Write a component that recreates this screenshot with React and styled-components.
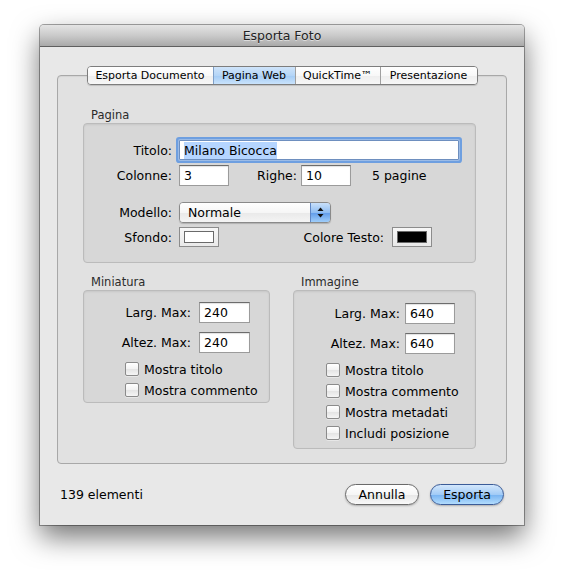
import React from "react";
import styled, { createGlobalStyle } from "styled-components";

const Global = createGlobalStyle`
  html, body { margin: 0; padding: 0; background: #ffffff; }
  body { font-family: "DejaVu Sans", "Liberation Sans", sans-serif; font-size: 12.5px; color: #000; }
  * { box-sizing: border-box; }
`;

const Page = styled.div`
  width: 564px;
  height: 580px;
  padding: 25px 0 0 40px;
`;

const Window = styled.div`
  width: 484px;
  height: 500px;
  display: flex;
  flex-direction: column;
  background: #e8e8e8;
  box-shadow: 0 0 0 1px rgba(0, 0, 0, 0.35), 0 12px 28px rgba(0, 0, 0, 0.55);
  border-radius: 4px 4px 0 0;
`;

const TitleBar = styled.div`
  height: 22px;
  flex: none;
  display: flex;
  align-items: center;
  justify-content: center;
  border-radius: 4px 4px 0 0;
  background: linear-gradient(#e4e4e4, #cacaca 50%, #a9a9a9);
  border-bottom: 1px solid #5f5f5f;
  color: #222;
  font-size: 12.5px;
  text-shadow: 0 1px 0 rgba(255, 255, 255, 0.5);
`;

const Body = styled.div`
  flex: 1;
  display: flex;
  flex-direction: column;
  padding: 19px 17px 0 17px;
`;

const TabStrip = styled.div`
  align-self: center;
  display: flex;
  height: 19px;
  margin-bottom: -10px;
  position: relative;
  z-index: 1;
  border: 1px solid #7d7d7d;
  border-radius: 4px;
  overflow: hidden;
  box-shadow: 0 1px 1px rgba(0, 0, 0, 0.15);
`;

const Tab = styled.div`
  width: ${(p) => p.$w}px;
  display: flex;
  align-items: center;
  justify-content: center;
  font-size: 11px;
  color: #000;
  border-left: ${(p) => (p.$first ? "none" : "1px solid #a0a0a0")};
  background: ${(p) =>
    p.$active
      ? "linear-gradient(#cfe4fa, #b4d5f7 50%, #a3cbf5 51%, #c9e3fc)"
      : "linear-gradient(#ffffff, #f8f8f8 50%, #eeeeee 51%, #f7f7f7)"};
  ${(p) => (p.$active ? "border-left-color: #7e9fc8;" : "")}
`;

const TabBox = styled.div`
  height: 389px;
  flex: none;
  border: 1px solid #a8a8a8;
  border-radius: 4px;
  background: #e1e1e1;
  padding: 32px 30px 0 25px;
  box-shadow: inset 0 1px 1px rgba(0, 0, 0, 0.06);
`;

const SectionLabel = styled.div`
  height: 14px;
  line-height: 14px;
  font-size: 11.5px;
  color: #2b2b2b;
  padding-left: 8px;
  margin: ${(p) => p.$mt || 0}px 0 1px 0;
`;

const Group = styled.div`
  background: #d7d7d7;
  border: 1px solid #bbbbbb;
  border-radius: 4px;
  box-shadow: inset 0 1px 2px rgba(0, 0, 0, 0.08);
  padding: ${(p) => p.$pad};
  height: ${(p) => (p.$h ? `${p.$h}px` : "auto")};
  display: flex;
  flex-direction: column;
`;

const Row = styled.div`
  display: flex;
  align-items: center;
  height: ${(p) => p.$h || 21}px;
  margin-top: ${(p) => p.$mt || 0}px;
`;

const Label = styled.div`
  width: ${(p) => p.$w}px;
  flex: none;
  text-align: right;
  margin-right: ${(p) => p.$gap ?? 7}px;
  white-space: nowrap;
`;

const Field = styled.div`
  width: ${(p) => p.$w}px;
  height: ${(p) => p.$h || 21}px;
  flex: none;
  background: #fff;
  border: 1px solid #9b9b9b;
  border-top-color: #6c6c6c;
  box-shadow: inset 0 1px 1px rgba(0, 0, 0, 0.12);
  display: flex;
  align-items: center;
  padding-left: 4px;
  white-space: nowrap;
  ${(p) =>
    p.$focus
      ? "box-shadow: 0 0 0 1px #9bbbe6, 0 0 0 3px #6e9fe0; border-color: #6e8fbf; border-radius: 1px;"
      : ""}
`;

const Selected = styled.span`
  background: #b5d5ff;
  padding: 1px 0;
`;

const Plain = styled.span`
  margin-left: ${(p) => p.$ml || 0}px;
  white-space: nowrap;
`;

const Popup = styled.div`
  width: 152px;
  height: 21px;
  flex: none;
  display: flex;
  border: 1px solid #8a8a8a;
  border-radius: 4px;
  overflow: hidden;
  box-shadow: 0 1px 1px rgba(0, 0, 0, 0.18);
`;

const PopupText = styled.div`
  flex: 1;
  display: flex;
  align-items: center;
  padding-left: 8px;
  background: linear-gradient(#ffffff, #f6f6f6 50%, #e9e9e9 51%, #f4f4f4);
`;

const PopupArrows = styled.div`
  width: 20px;
  display: flex;
  align-items: center;
  justify-content: center;
  border-left: 1px solid #5f86c4;
  background: linear-gradient(#c9e0fa, #8fbdf2 50%, #5f9bea 51%, #9fcdf9);
`;

const Well = styled.div`
  width: 40px;
  height: 20px;
  flex: none;
  border: 1px solid #8c8c8c;
  background: linear-gradient(#f7f7f7, #e9e9e9);
  padding: 3px 4px;
`;

const Swatch = styled.div`
  width: 100%;
  height: 100%;
  border: 1px solid #6a6a6a;
  background: ${(p) => p.$color};
`;

const Columns = styled.div`
  display: grid;
  grid-template-columns: 187px 1fr;
  column-gap: 23px;
  align-items: start;
`;

const CheckRow = styled.div`
  display: flex;
  align-items: center;
  height: 20px;
  margin-top: ${(p) => p.$mt ?? 1}px;
  padding-left: ${(p) => p.$indent}px;
  white-space: nowrap;
`;

const Box = styled.div`
  width: 14px;
  height: 14px;
  flex: none;
  border: 1px solid #8b8b8b;
  border-radius: 2px;
  background: linear-gradient(#ffffff, #f2f2f2 50%, #e4e4e4 51%, #f5f5f5);
  box-shadow: 0 1px 0 rgba(255, 255, 255, 0.4);
  margin-right: 5px;
`;

const BottomBar = styled.div`
  flex: 1;
  display: flex;
  align-items: center;
  padding: 0 3px 0 3px;
`;

const Count = styled.div`
  flex: 1;
`;

const Button = styled.div`
  width: 74px;
  height: 21px;
  border-radius: 11px;
  display: flex;
  align-items: center;
  justify-content: center;
  margin-left: ${(p) => p.$ml || 0}px;
  border: 1px solid ${(p) => (p.$primary ? "#3b5c98" : "#6a6a6a")};
  background: ${(p) =>
    p.$primary
      ? "linear-gradient(#d3e7fc, #a2cbf6 50%, #77b2f1 51%, #b2dcfd)"
      : "linear-gradient(#ffffff, #f6f6f6 50%, #e6e6e6 51%, #f9f9f9)"};
  box-shadow: 0 1px 2px rgba(0, 0, 0, 0.25);
`;

const Checks = ({ items, indent, firstMt }) =>
  items.map((t, i) => (
    <CheckRow key={t} $indent={indent} $mt={i === 0 ? firstMt : 1}>
      <Box />
      {t}
    </CheckRow>
  ));

export default function App() {
  return (
    <Page>
      <Global />
      <Window>
        <TitleBar>Esporta Foto</TitleBar>
        <Body>
          <TabStrip>
            <Tab $w={125} $first>Esporta Documento</Tab>
            <Tab $w={82} $active>Pagina Web</Tab>
            <Tab $w={85}>QuickTime™</Tab>
            <Tab $w={97}>Presentazione</Tab>
          </TabStrip>
          <TabBox>
            <SectionLabel>Pagina</SectionLabel>
            <Group $pad="16px 0 0 0" $h={140}>
              <Row $h={20}>
                <Label $w={88}>Titolo:</Label>
                <Field $w={280} $h={20} $focus>
                  <Selected>Milano Bicocca</Selected>
                </Field>
              </Row>
              <Row $mt={5}>
                <Label $w={88}>Colonne:</Label>
                <Field $w={50}>3</Field>
                <Label $w={68} $gap={4}>Righe:</Label>
                <Field $w={50}>10</Field>
                <Plain $ml={21}>5 pagine</Plain>
              </Row>
              <Row $mt={16}>
                <Label $w={88}>Modello:</Label>
                <Popup>
                  <PopupText>Normale</PopupText>
                  <PopupArrows>
                    <svg width="7" height="11" viewBox="0 0 7 11">
                      <path d="M3.5 0.5 L6.5 4 L0.5 4 Z" fill="#111" />
                      <path d="M3.5 10.5 L6.5 7 L0.5 7 Z" fill="#111" />
                    </svg>
                  </PopupArrows>
                </Popup>
              </Row>
              <Row $mt={4} $h={20}>
                <Label $w={88}>Sfondo:</Label>
                <Well>
                  <Swatch $color="#ffffff" />
                </Well>
                <Label $w={165} $gap={8}>Colore Testo:</Label>
                <Well>
                  <Swatch $color="#000000" />
                </Well>
              </Row>
            </Group>
            <Columns>
              <div>
                <SectionLabel $mt={12}>Miniatura</SectionLabel>
                <Group $pad="11px 0 2px 0">
                  <Row>
                    <Label $w={107} $gap={8}>Larg. Max:</Label>
                    <Field $w={51}>240</Field>
                  </Row>
                  <Row $mt={9}>
                    <Label $w={107} $gap={8}>Altez. Max:</Label>
                    <Field $w={51}>240</Field>
                  </Row>
                  <Checks indent={41} firstMt={6} items={["Mostra titolo", "Mostra commento"]} />
                </Group>
              </div>
              <div>
                <SectionLabel $mt={12}>Immagine</SectionLabel>
                <Group $pad="12px 0 5px 0">
                  <Row>
                    <Label $w={106} $gap={5}>Larg. Max:</Label>
                    <Field $w={50}>640</Field>
                  </Row>
                  <Row $mt={9}>
                    <Label $w={106} $gap={5}>Altez. Max:</Label>
                    <Field $w={50}>640</Field>
                  </Row>
                  <Checks
                    indent={32}
                    firstMt={6}
                    items={["Mostra titolo", "Mostra commento", "Mostra metadati", "Includi posizione"]}
                  />
                </Group>
              </div>
            </Columns>
          </TabBox>
          <BottomBar>
            <Count>139 elementi</Count>
            <Button>Annulla</Button>
            <Button $primary $ml={11}>Esporta</Button>
          </BottomBar>
        </Body>
      </Window>
    </Page>
  );
}
